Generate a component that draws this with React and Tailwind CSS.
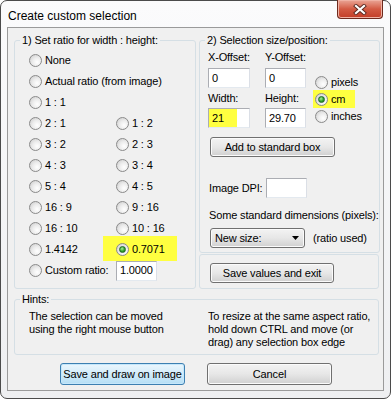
import React from 'react';

const Radio = ({ checked }) => (
  <span className="flex h-[13px] w-[13px] shrink-0 items-center justify-center rounded-full border border-[#8a8a8a] bg-[radial-gradient(circle_at_65%_65%,#ffffff_0%,#ececec_45%,#c8c8c8_100%)]">
    {checked && (
      <span className="h-[7px] w-[7px] rounded-full border border-[#1f6b1f] bg-[radial-gradient(circle_at_40%_35%,#a8ef9a_0%,#2fa12f_55%,#186818_100%)]" />
    )}
  </span>
);

const Option = ({ label, checked }) => (
  <div className="relative flex h-full items-center gap-[3px]">
    <Radio checked={checked} />
    <span className="leading-[13px]">{label}</span>
  </div>
);

const TextBox = ({ value, className = '', marked }) => (
  <div
    className={`flex h-[20px] items-center border border-[#abadb3] border-b-[#e3e9ef] border-r-[#dbdfe6] bg-white leading-[13px] ${className}`}
  >
    {marked ? (
      <span className="flex h-full w-[28px] items-center bg-[#ffff40] pl-[3px]">{value}</span>
    ) : (
      <span className="pl-[3px]">{value}</span>
    )}
  </div>
);

const Button = ({ children, className = '', primary }) => (
  <div
    className={`flex items-center justify-center rounded-[3px] border leading-[13px] ${
      primary
        ? 'border-[#3c7fb1] bg-linear-to-b from-[#eaf6fd] via-[#d3ecfa] to-[#b4def5] shadow-[inset_0_0_0_1px_#c5e7fb]'
        : 'border-[#707070] bg-linear-to-b from-[#f3f3f3] via-[#e7e7e7] to-[#d0d0d0] shadow-[inset_0_0_0_1px_#fbfbfb]'
    } ${className}`}
  >
    {children}
  </div>
);

const Group = ({ label, className = '', children }) => (
  <fieldset className={`rounded-[3px] border border-[#d5dfe5] ${className}`}>
    {label && <legend className="ml-[5px] px-[2px] leading-[13px]">{label}</legend>}
    {children}
  </fieldset>
);

const ratios = [
  ['2 : 1', '1 : 2'],
  ['3 : 2', '2 : 3'],
  ['4 : 3', '3 : 4'],
  ['5 : 4', '4 : 5'],
  ['16 : 9', '9 : 16'],
  ['16 : 10', '10 : 16'],
];

export default function App() {
  return (
    <div className="h-[399px] w-[391px] whitespace-nowrap bg-white font-['Liberation_Sans',Arial,sans-serif] text-[11px] tracking-[-0.15px] text-black">
      <div className="flex h-full flex-col rounded-[7px] border border-[#4b4b4b] bg-linear-to-b from-[#fbfbfc] to-[#eeeff1]">
        {/* Title bar */}
        <div className="flex h-[26px] shrink-0 items-start">
          <div className="pl-[7px] pt-[8px] text-[12px] leading-[14px] tracking-normal">Create custom selection</div>
          <div className="-mt-px ml-auto mr-[7px] flex h-[19px] w-[46px] items-center justify-center rounded-b-[4px] border border-t-0 border-[#6e2a1e] bg-linear-to-b from-[#e9a596] via-[#d35a43] to-[#c23c26] shadow-[inset_0_0_0_1px_#f0b2a4]">
            <svg width="14" height="11" viewBox="0 0 14 11">
              <path d="M3 2 L11 9 M11 2 L3 9" stroke="#5a2a22" strokeWidth="4" strokeLinecap="square" />
              <path d="M3 2 L11 9 M11 2 L3 9" stroke="#ffffff" strokeWidth="2.2" strokeLinecap="square" />
            </svg>
          </div>
        </div>

        {/* Client area */}
        <div className="mx-[6px] mb-[7px] flex flex-1 flex-col border border-[#9a9a9a] bg-[#f0f0f0] pl-[6px] pt-[6px]">
          <div className="flex gap-[3px]">
            {/* Group 1 */}
            <Group label="1) Set ratio for width : height:" className="h-[255px] w-[182px]">
              <div className="grid grid-cols-[87px_1fr] auto-rows-[21px] pl-[14px] pt-[3px]">
                <div className="col-span-2"><Option label="None" /></div>
                <div className="col-span-2"><Option label="Actual ratio (from image)" /></div>
                <div className="col-span-2"><Option label="1 : 1" /></div>
                {ratios.map(([a, b]) => (
                  <React.Fragment key={a}>
                    <Option label={a} />
                    <Option label={b} />
                  </React.Fragment>
                ))}
                <Option label="1.4142" />
                <div className="relative">
                  <span className="absolute left-[-13px] top-[-3px] h-[25px] w-[74px] bg-[#ffff40]" />
                  <Option label="0.7071" checked />
                </div>
                <div className="flex items-center">
                  <Option label="Custom ratio:" />
                </div>
                <div className="flex items-center">
                  <TextBox value="1.0000" className="w-[41px]" />
                </div>
              </div>
            </Group>

            {/* Right column */}
            <div className="flex h-[255px] w-[180px] flex-col gap-[1px]">
              <Group label="2) Selection size/position:" className="h-[219px]">
                <div className="flex flex-col pl-[8px] pt-[4px]">
                  <div className="flex">
                    <div className="w-[57px]">
                      <div className="h-[13px] leading-[13px]">X-Offset:</div>
                      <TextBox value="0" className="mt-[4px] w-[42px]" />
                      <div className="mt-[4px] h-[13px] leading-[13px]">Width:</div>
                      <TextBox value="21" marked className="mt-[3px] w-[42px]" />
                    </div>
                    <div className="w-[41px]">
                      <div className="h-[13px] leading-[13px]">Y-Offset:</div>
                      <TextBox value="0" className="mt-[4px] w-[41px]" />
                      <div className="mt-[4px] h-[13px] leading-[13px]">Height:</div>
                      <TextBox value="29.70" className="mt-[3px] w-[41px]" />
                    </div>
                    <div className="ml-[9px] mt-[23px] flex flex-col">
                      <div className="h-[17px]"><Option label="pixels" /></div>
                      <div className="relative h-[17px]">
                        <span className="absolute left-[-2px] top-[-1px] h-[18px] w-[42px] bg-[#ffff40]" />
                        <Option label="cm" checked />
                      </div>
                      <div className="h-[17px]"><Option label="inches" /></div>
                    </div>
                  </div>
                  <Button className="ml-[2px] mt-[9px] h-[20px] w-[125px]">Add to standard box</Button>
                  <div className="mt-[21px] flex items-center">
                    <span className="w-[58px] pl-[1px] leading-[13px]">Image DPI:</span>
                    <TextBox value="" className="w-[41px]" />
                  </div>
                  <div className="mt-[11px] pl-[1px] leading-[13px]">Some standard dimensions (pixels):</div>
                  <div className="mt-[6px] flex items-center">
                    <div className="ml-[2px] flex h-[20px] w-[95px] items-center justify-between rounded-[3px] border border-[#707070] bg-linear-to-b from-[#f3f3f3] via-[#e7e7e7] to-[#d0d0d0] pl-[4px] pr-[5px] shadow-[inset_0_0_0_1px_#fbfbfb]">
                      <span className="leading-[13px]">New size:</span>
                      <svg width="7" height="4" viewBox="0 0 7 4">
                        <path d="M0 0 H7 L3.5 4 Z" fill="#000" />
                      </svg>
                    </div>
                    <span className="ml-[8px] leading-[13px]">(ratio used)</span>
                  </div>
                </div>
              </Group>
              <Group className="flex-1">
                <div className="pl-[10px] pt-[8px]">
                  <Button className="h-[20px] w-[124px]">Save values and exit</Button>
                </div>
              </Group>
            </div>
          </div>

          {/* Hints */}
          <Group label="Hints:" className="mt-[4px] h-[62px] w-[365px]">
            <div className="flex pl-[14px] pt-[4px] leading-[13px]">
              <div className="w-[179px]">
                <div>The selection can be moved</div>
                <div>using the right mouse button</div>
              </div>
              <div>
                <div>To resize at the same aspect ratio,</div>
                <div>hold down CTRL and move (or</div>
                <div>drag) any selection box edge</div>
              </div>
            </div>
          </Group>

          {/* Buttons */}
          <div className="ml-[46px] mt-[8px] flex gap-[22px]">
            <Button primary className="h-[22px] w-[125px]">Save and draw on image</Button>
            <Button className="h-[22px] w-[125px]">Cancel</Button>
          </div>
        </div>
      </div>
    </div>
  );
}
